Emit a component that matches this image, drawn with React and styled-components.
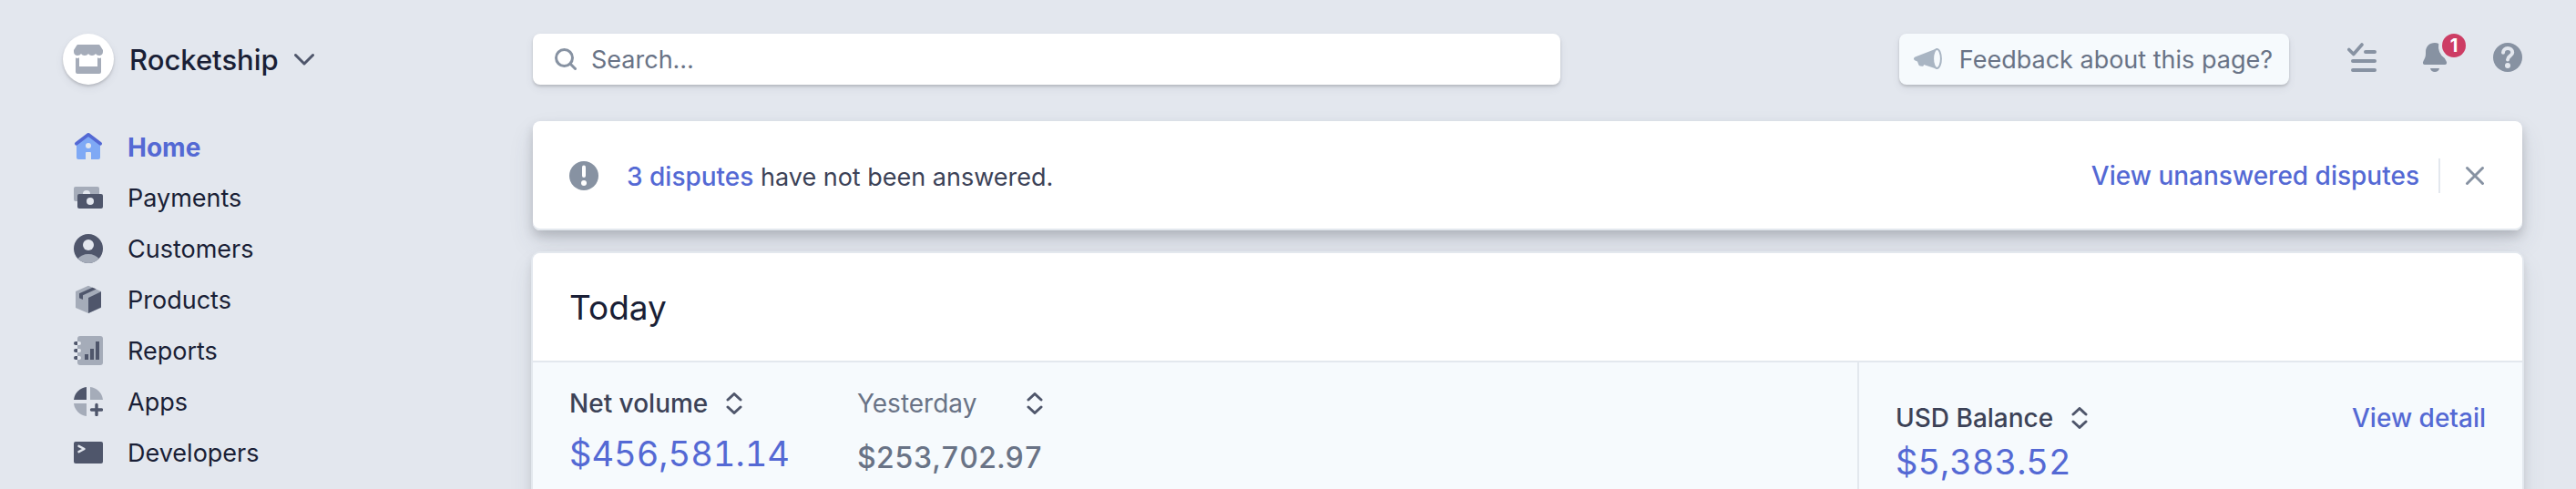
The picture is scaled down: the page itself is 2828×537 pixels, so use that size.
import React from "react";
import styled, { createGlobalStyle, css } from "styled-components";

const color = {
  page: "#e3e7ee",
  line: "#e3e8ee",
  white: "#ffffff",
  pale: "#f6fafd",
  ink: "#1a1f36",
  text: "#3c4257",
  muted: "#697386",
  icon: "#8792a2",
  dark: "#4f566b",
  light: "#a5acb9",
  accent: "#5469d4",
  sky: "#7fa9f5",
  alert: "#cd3d64",
};

const GlobalStyle = createGlobalStyle`
  *, *::before, *::after { box-sizing: border-box; }
  body {
    margin: 0;
    background: ${color.page};
    color: ${color.text};
    font-family: Inter, "Liberation Sans", sans-serif;
    font-size: 28px;
    line-height: 40px;
  }
  a { color: inherit; text-decoration: none; }
  svg { display: block; flex: none; }
`;

const raised = css`
  box-shadow: 0 4px 10px rgba(60, 66, 87, 0.08), 0 2px 3px rgba(0, 0, 0, 0.16);
`;

const plainButton = css`
  padding: 0;
  border: 0;
  background: none;
  color: inherit;
  font: inherit;
  cursor: pointer;
`;

const Page = styled.div`
  display: flex;
  height: 100vh;
  overflow: hidden;
  padding: 37px 59px 0 69px;
`;

const Sidebar = styled.aside`
  flex: 0 0 516px;
  display: flex;
  flex-direction: column;
  gap: 40px;
`;

const Label = styled.span`
  padding-top: 2px;
`;

const AccountButton = styled.button`
  ${plainButton}
  display: flex;
  align-items: center;
  align-self: flex-start;
  gap: 17px;
  color: ${color.ink};
  font-size: 31px;
  font-weight: 500;
`;

const AccountLogo = styled.span`
  display: grid;
  place-items: center;
  width: 56px;
  height: 56px;
  border-radius: 50%;
  background: ${color.white};
  ${raised}
`;

const NavList = styled.ul`
  margin: 0;
  padding: 0 12px;
  list-style: none;
`;

const NavLink = styled.a`
  display: flex;
  align-items: center;
  gap: 27px;
  height: 56px;
  font-size: ${(p) => (p.$active ? "28px" : "27px")};
  color: ${(p) => (p.$active ? color.accent : color.ink)};
  font-weight: ${(p) => (p.$active ? 700 : 400)};
`;

const Main = styled.main`
  flex: 1;
  min-width: 0;
`;

const TopBar = styled.header`
  display: flex;
  align-items: center;
  margin-bottom: 40px;
`;

const SearchBox = styled.label`
  flex: 0 1 1128px;
  display: flex;
  align-items: center;
  gap: 16px;
  height: 56px;
  padding: 0 24px;
  border-radius: 8px;
  background: ${color.white};
  ${raised}
`;

const SearchInput = styled.input`
  flex: 1;
  min-width: 0;
  padding: 2px 0 0;
  border: 0;
  outline: 0;
  background: none;
  color: ${color.text};
  font: inherit;
  font-size: 27px;
  &::placeholder { color: ${color.muted}; opacity: 1; }
`;

const FeedbackButton = styled.button`
  ${plainButton}
  display: flex;
  align-items: center;
  gap: 18px;
  height: 56px;
  margin-left: auto;
  padding: 0 18px 0 16px;
  border-radius: 8px;
  background: ${color.pale};
  color: ${color.muted};
  font-size: 27px;
  white-space: nowrap;
  ${raised}
`;

const Tools = styled.div`
  display: flex;
  gap: 48px;
  margin: 0 0 4px 64px;
`;

const ToolButton = styled.button`
  ${plainButton}
  position: relative;
  color: ${color.icon};
`;

const Badge = styled.span`
  position: absolute;
  top: -10px;
  right: -18px;
  width: 26px;
  height: 26px;
  border-radius: 13px;
  background: ${color.alert};
  color: ${color.white};
  font-size: 20px;
  font-weight: 700;
  line-height: 26px;
  text-align: center;
`;

const Card = styled.section`
  border-radius: 8px;
  background: ${color.pale};
  box-shadow: 0 0 0 2px ${color.line}, 0 14px 28px rgba(60, 66, 87, 0.1),
    0 6px 12px rgba(0, 0, 0, 0.14);
`;

const Notice = styled.section`
  display: flex;
  align-items: center;
  height: 120px;
  margin-bottom: 25px;
  padding: 0 40px;
  border-radius: 8px;
  background: ${color.white};
  box-shadow: inset 0 -2px 0 ${color.line}, 0 14px 28px rgba(60, 66, 87, 0.12),
    0 6px 12px rgba(0, 0, 0, 0.16);
`;

const NoticeText = styled.p`
  flex: 1;
  margin: 0 0 0 31px;
  padding-top: 2px;
  font-size: 27px;
`;

const TextLink = styled.a`
  color: ${color.accent};
  font-size: 28px;
  font-weight: 500;
`;

const Divider = styled.span`
  width: 2px;
  height: 38px;
  margin: 0 26px 0 21px;
  background: ${color.line};
`;

const CloseButton = styled.button`
  ${plainButton}
  color: ${color.icon};
`;

const CardHeader = styled.header`
  display: flex;
  align-items: center;
  height: 120px;
  padding: 2px 40px 0;
  border-bottom: 2px solid ${color.line};
  border-radius: 8px 8px 0 0;
  background: ${color.white};
`;

const CardTitle = styled.h2`
  margin: 0;
  color: ${color.ink};
  font-size: 37px;
  font-weight: 400;
`;

const Columns = styled.div`
  display: grid;
  grid-template-columns: 2fr 1fr;
`;

const VolumePane = styled.div`
  display: flex;
  gap: 74px;
  padding: 25px 40px 56px;
  border-right: 2px solid ${color.line};
`;

const BalancePane = styled.div`
  padding: 41px 40px 56px;
`;

const PaneHeader = styled.div`
  display: flex;
  justify-content: space-between;
`;

const MetricButton = styled.button`
  ${plainButton}
  display: flex;
  align-items: center;
  justify-content: ${(p) => (p.$spread ? "space-between" : "flex-start")};
  gap: 20px;
  width: ${(p) => (p.$spread ? "100%" : "auto")};
  color: ${(p) => (p.$muted ? color.muted : color.text)};
  font-weight: ${(p) => (p.$muted ? 400 : 500)};
`;

const Amount = styled.p`
  margin: ${(p) => p.$gap}px 0 0;
  color: ${(p) => (p.$small ? color.muted : color.accent)};
  font-size: ${(p) => (p.$small ? "32px" : "38px")};
  font-weight: ${(p) => (p.$small ? 500 : 400)};
  font-variant-numeric: tabular-nums;
`;

const Icon = ({ size = 32, children, ...rest }) => (
  <svg width={size} height={size} viewBox={`0 0 ${size} ${size}`} fill="none" aria-hidden="true" {...rest}>
    {children}
  </svg>
);

const StoreIcon = () => (
  <Icon fill={color.light}>
    <path d="M5 0h22c1 0 1.600.4 2 1.200L32 6v2c0 2.500-2 4-4 4-1.800 0-3.200-.8-4-2-.8 1.200-2.200 2-4 2s-3.200-.8-4-2c-.8 1.200-2.200 2-4 2s-3.200-.8-4-2c-.8 1.200-2.200 2-4 2-2 0-4-1.500-4-4V6l3-4.800C3.400.4 4 0 5 0z" />
    <path d="M2 14.500c1.500.6 3 .5 4-.3V24h20v-9.800c1 .8 2.500.9 4 .3V30a2 2 0 0 1-2 2H4a2 2 0 0 1-2-2z" />
  </Icon>
);

const ChevronIcon = () => (
  <svg width="22" height="14" viewBox="0 0 22 14" fill="none" aria-hidden="true">
    <path d="M1.500 2.500 11 12 20.500 2.500" stroke={color.dark} strokeWidth="3" strokeLinecap="round" strokeLinejoin="round" />
  </svg>
);

const HomeIcon = () => (
  <Icon>
    <path d="M3 12 16 2l13 10v16a2 2 0 0 1-2 2h-8v-7a1 1 0 0 0-1-1h-4a1 1 0 0 0-1 1v7H5a2 2 0 0 1-2-2z" fill={color.sky} />
    <circle cx="16" cy="15" r="3" fill={color.page} />
    <path d="M2.800 12.800 16 2.800l13.200 10" stroke={color.accent} strokeWidth="3.600" strokeLinecap="round" strokeLinejoin="round" />
  </Icon>
);

const PaymentsIcon = () => (
  <Icon>
    <rect y="4" width="28" height="16" rx="2" fill={color.light} />
    <circle cx="14" cy="12" r="4" fill={color.page} />
    <rect x="4" y="12" width="28" height="16" rx="2" fill={color.dark} />
    <circle cx="18" cy="20" r="4" fill={color.page} />
  </Icon>
);

const CustomersIcon = () => (
  <Icon>
    <circle cx="16" cy="16" r="16" fill={color.dark} />
    <circle cx="16" cy="12" r="6" fill={color.page} />
    <path d="M4.500 27.100C7 24 11 22 16 22s9 2 11.500 5.100A16 16 0 0 1 4.500 27.100z" fill={color.light} />
  </Icon>
);

const ProductsIcon = () => (
  <Icon>
    <path d="M16 .7 30 7v18L16 31 2 25V7z" fill={color.light} />
    <path d="M16 14 30 7.200V24.500L16 31z" fill={color.dark} />
    <path d="M20.500 2.700 6 9.300v5L10 16v-4.700l14.700-6.800z" fill={color.dark} />
  </Icon>
);

const ReportsIcon = () => (
  <Icon>
    <rect x="4" width="28" height="32" rx="3" fill={color.light} />
    {[6, 14, 22].map((y) => (
      <React.Fragment key={y}>
        <path d={`M4 ${y}h2a2 2 0 0 1 0 4h-2z`} fill={color.page} />
        <path d={`M4 ${y}h-2a2 2 0 0 0 0 4h2z`} fill={color.dark} />
      </React.Fragment>
    ))}
    <path d="M12 20h4v6h-4zM18 14h4v12h-4zM24 6h4v20h-4z" fill={color.dark} />
  </Icon>
);

const AppsIcon = () => (
  <Icon>
    <path d="M14 0v14H0A16 16 0 0 1 14 0z" fill={color.dark} />
    <path d="M18 0a16 16 0 0 1 14 14H18zM0 18h14v14A16 16 0 0 1 0 18z" fill={color.light} />
    <path d="M25 19.500v11M19.500 25h11" stroke={color.dark} strokeWidth="3.400" strokeLinecap="round" />
  </Icon>
);

const DevelopersIcon = () => (
  <Icon>
    <rect y="4" width="32" height="24" rx="2" fill={color.dark} />
    <path d="M5.500 8.800 11.500 12l-6 3.200" stroke={color.page} strokeWidth="2.500" strokeLinecap="round" strokeLinejoin="round" />
  </Icon>
);

const SearchIcon = () => (
  <Icon size={24} stroke={color.icon} strokeWidth="3" strokeLinecap="round">
    <circle cx="10.500" cy="10.500" r="9" />
    <path d="m17 17 5.500 5.500" />
  </Icon>
);

const MegaphoneIcon = () => (
  <Icon>
    <path d="M26 4 1.500 13.500C.4 14 0 14.700 0 15.500s.4 1.500 1.500 2L4 18.500l1.200 3.300c.4 1 1 1.500 2 1.700l2 .3c1.200.1 1.800-.6 1.800-1.800L26 27z" fill="#a9b5c3" />
    <ellipse cx="25.500" cy="15.500" rx="4.400" ry="10.500" fill={color.pale} stroke="#a9b5c3" strokeWidth="2" />
  </Icon>
);

const ChecklistIcon = () => (
  <Icon stroke="currentColor" strokeWidth="4" strokeLinecap="round" strokeLinejoin="round">
    <path d="m1.800 7.500 5 5L16 2" strokeWidth="3.600" />
    <path d="M20 10h10M6 20h24M6 30h24" />
  </Icon>
);

const BellIcon = () => (
  <Icon fill="currentColor">
    <path d="M16 0c1.500 0 3 .3 4.200.9A17 17 0 0 0 26.800 17l1.700 3c1.200 2 .5 4-1.500 4H5c-2 0-2.700-2-1.500-4C5 17.500 6 15 6 12v-2C6 4 10 0 16 0zM11 28h10c-.5 2.500-2.500 4-5 4s-4.500-1.500-5-4z" />
  </Icon>
);

const HelpIcon = () => (
  <Icon>
    <circle cx="16" cy="16" r="16" fill="currentColor" />
    <path d="M11 10.800C11 8 13.200 6 16 6s5.200 2 5.200 4.800C21.200 14.500 16 14.500 16 18.500" stroke={color.page} strokeWidth="4" strokeLinecap="round" />
    <circle cx="16" cy="25" r="3" fill={color.page} />
  </Icon>
);

const AlertIcon = () => (
  <Icon>
    <circle cx="16" cy="16" r="16" fill={color.icon} />
    <path d="M16 6.500V16" stroke={color.white} strokeWidth="4" strokeLinecap="round" />
    <circle cx="16" cy="24" r="3" fill={color.white} />
  </Icon>
);

const CloseIcon = () => (
  <Icon size={24} stroke="currentColor" strokeWidth="3" strokeLinecap="round">
    <path d="m3.500 3.500 17 17M20.500 3.500l-17 17" />
  </Icon>
);

const SortIcon = () => (
  <svg width="18" height="24" viewBox="0 0 18 24" fill="none" aria-hidden="true">
    <path d="m2 8 7-6.500L16 8M2 16l7 6.500 7-6.500" stroke={color.dark} strokeWidth="3" strokeLinecap="round" strokeLinejoin="round" />
  </svg>
);

const navItems = [
  { label: "Home", icon: HomeIcon, active: true },
  { label: "Payments", icon: PaymentsIcon },
  { label: "Customers", icon: CustomersIcon },
  { label: "Products", icon: ProductsIcon },
  { label: "Reports", icon: ReportsIcon },
  { label: "Apps", icon: AppsIcon },
  { label: "Developers", icon: DevelopersIcon },
];

export default function App() {
  return (
    <>
      <GlobalStyle />
      <Page>
        <Sidebar>
          <AccountButton type="button">
            <AccountLogo><StoreIcon /></AccountLogo>
            <Label>Rocketship</Label>
            <ChevronIcon />
          </AccountButton>
          <nav>
            <NavList>
              {navItems.map(({ label, icon: Glyph, active }) => (
                <li key={label}>
                  <NavLink href="#" $active={active} aria-current={active ? "page" : undefined}>
                    <Glyph />
                    <Label>{label}</Label>
                  </NavLink>
                </li>
              ))}
            </NavList>
          </nav>
        </Sidebar>

        <Main>
          <TopBar>
            <SearchBox>
              <SearchIcon />
              <SearchInput type="search" placeholder="Search…" aria-label="Search" />
            </SearchBox>
            <FeedbackButton type="button">
              <MegaphoneIcon />
              <Label>Feedback about this page?</Label>
            </FeedbackButton>
            <Tools>
              <ToolButton type="button" aria-label="Setup guide"><ChecklistIcon /></ToolButton>
              <ToolButton type="button" aria-label="Notifications">
                <BellIcon />
                <Badge>1</Badge>
              </ToolButton>
              <ToolButton type="button" aria-label="Help"><HelpIcon /></ToolButton>
            </Tools>
          </TopBar>

          <Notice>
            <AlertIcon />
            <NoticeText>
              <TextLink href="#">3 disputes</TextLink> have not been answered.
            </NoticeText>
            <TextLink href="#">View unanswered disputes</TextLink>
            <Divider />
            <CloseButton type="button" aria-label="Dismiss"><CloseIcon /></CloseButton>
          </Notice>

          <Card>
            <CardHeader>
              <CardTitle>Today</CardTitle>
            </CardHeader>
            <Columns>
              <VolumePane>
                <div>
                  <MetricButton type="button">Net volume <SortIcon /></MetricButton>
                  <Amount $gap={15}>$456,581.14</Amount>
                </div>
                <div>
                  <MetricButton type="button" $muted $spread>Yesterday <SortIcon /></MetricButton>
                  <Amount $small $gap={20}>$253,702.97</Amount>
                </div>
              </VolumePane>
              <BalancePane>
                <PaneHeader>
                  <MetricButton type="button">USD Balance <SortIcon /></MetricButton>
                  <TextLink href="#">View detail</TextLink>
                </PaneHeader>
                <Amount $gap={8}>$5,383.52</Amount>
              </BalancePane>
            </Columns>
          </Card>
        </Main>
      </Page>
    </>
  );
}
